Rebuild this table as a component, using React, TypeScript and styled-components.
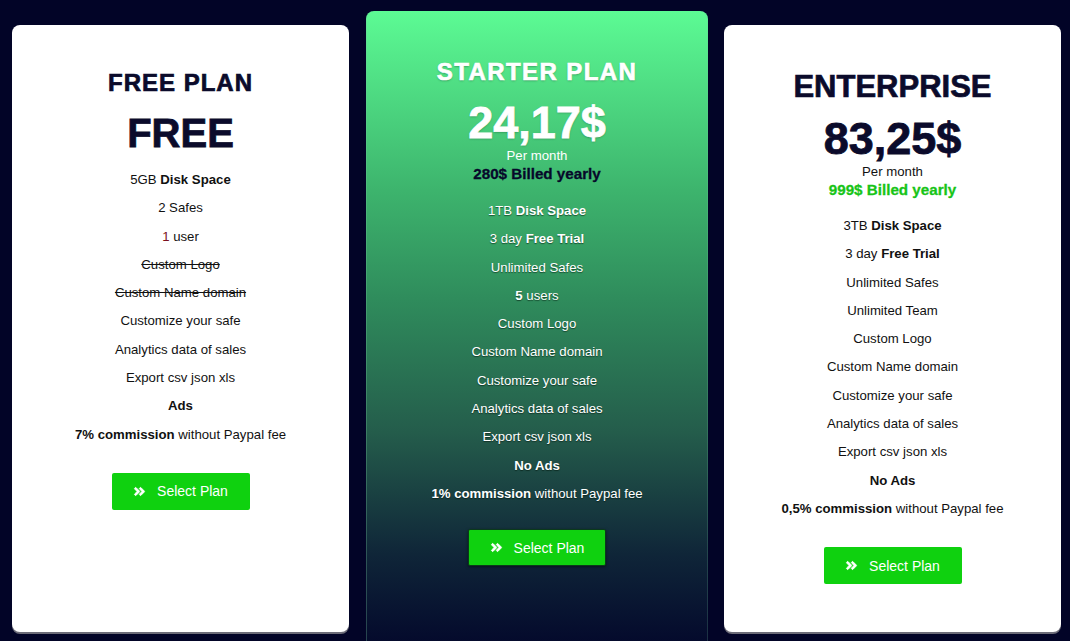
import { FC, ReactNode } from 'react'
import styled, { createGlobalStyle } from 'styled-components'
import { FaAngleDoubleRight } from 'react-icons/fa'

const GlobalStyle = createGlobalStyle`
  html, body {
    margin: 0;
    padding: 0;
    background: #020427;
    font-family: "Liberation Sans", Arial, sans-serif;
    overflow: hidden;
  }
`

const Page = styled.div`
  display: flex;
  align-items: flex-start;
  gap: 16px;
  padding-left: 12px;
  height: 641px;
  box-sizing: border-box;
`

const Card = styled.div<{ $featured?: boolean }>`
  display: flex;
  flex-direction: column;
  align-items: center;
  box-sizing: border-box;
  width: ${p => (p.$featured ? '342px' : '337px')};
  height: ${p => (p.$featured ? '640px' : '607px')};
  margin-top: ${p => (p.$featured ? '11px' : '25px')};
  margin-left: ${p => (p.$featured ? '1px' : '0')};
  padding-top: ${p => (p.$featured ? '47px' : '44px')};
  border-radius: 8px;
  color: #111;
  background: ${p =>
    p.$featured
      ? 'linear-gradient(180deg, #5cfb94 0%, #3db46d 28%, #2f8c5c 45%, #245c4b 66%, #0f2538 85%, #03072b 100%)'
      : '#fff'};
  box-shadow: ${p =>
    p.$featured
      ? 'inset 1px 0 0 rgba(120, 200, 160, 0.3), inset -1px 0 0 rgba(120, 200, 160, 0.2)'
      : '0 2px 0 #6c6c78'};
`

const Title = styled.h2<{ $size: number; $spacing: number; $light?: boolean }>`
  margin: 0;
  font-size: ${p => p.$size}px;
  line-height: ${p => p.$size + 4}px;
  font-weight: 700;
  letter-spacing: ${p => p.$spacing}px;
  -webkit-text-stroke: 0.7px ${p => (p.$light ? '#fff' : '#0b0b2b')};
  color: ${p => (p.$light ? '#fff' : '#0b0b2b')};
  text-shadow: ${p => (p.$light ? '0 1px 2px rgba(0, 40, 20, 0.35)' : 'none')};
`

const Price = styled.div<{ $size: number; $gap: number; $light?: boolean }>`
  margin-top: ${p => p.$gap}px;
  font-size: ${p => p.$size}px;
  line-height: ${p => p.$size + 4}px;
  font-weight: 700;
  -webkit-text-stroke: 0.8px ${p => (p.$light ? '#fff' : '#0b0b2b')};
  color: ${p => (p.$light ? '#fff' : '#0b0b2b')};
  text-shadow: ${p => (p.$light ? '0 1px 2px rgba(0, 40, 20, 0.35)' : 'none')};
`

const PerMonth = styled.div<{ $light?: boolean }>`
  font-size: 13.2px;
  line-height: 18px;
  color: ${p => (p.$light ? '#fff' : '#111')};
`

const Billed = styled.div<{ $color: string }>`
  font-size: 15.2px;
  line-height: 18px;
  font-weight: 700;
  -webkit-text-stroke: 0.3px ${p => p.$color};
  color: ${p => p.$color};
`

const Features = styled.ul<{ $gap: number; $light?: boolean }>`
  list-style: none;
  margin: ${p => p.$gap}px 0 0;
  padding: 0;
  text-align: center;
  font-size: 13.2px;
  line-height: 28.3px;
  color: ${p => (p.$light ? '#fff' : '#111')};
  text-shadow: ${p => (p.$light ? '0 1px 1px rgba(0, 20, 10, 0.55)' : 'none')};
`

const Feature = styled.li<{ $off?: boolean }>`
  text-decoration: ${p => (p.$off ? 'line-through' : 'none')};
`

const Accent = styled.span`
  color: #7a1020;
`

const Button = styled.button<{ $gap: number; $outlined?: boolean }>`
  display: flex;
  align-items: center;
  justify-content: center;
  gap: 11px;
  margin-top: ${p => p.$gap}px;
  width: 138px;
  height: 37px;
  padding: 0;
  border: ${p => (p.$outlined ? '1px solid #0a3a1a' : 'none')};
  border-radius: 2px;
  background: #0fd10f;
  color: #fff;
  font-family: inherit;
  font-size: 14px;
  cursor: pointer;
  box-shadow: ${p => (p.$outlined ? '0 1px 3px rgba(0, 0, 0, 0.5)' : 'none')};

  svg {
    width: 13px;
    height: 13px;
    stroke: #fff;
    stroke-width: 30px;
  }
`

type Item = { text: ReactNode; off?: boolean }

const PlanFeatures: FC<{ items: Item[]; gap: number; light?: boolean }> = ({ items, gap, light }) => (
  <Features $gap={gap} $light={light}>
    {items.map((item, i) => (
      <Feature key={i} $off={item.off}>{item.text}</Feature>
    ))}
  </Features>
)

const SelectButton: FC<{ gap: number; outlined?: boolean }> = ({ gap, outlined }) => (
  <Button $gap={gap} $outlined={outlined}>
    <FaAngleDoubleRight />
    Select Plan
  </Button>
)

const freeItems: Item[] = [
  { text: <>5GB <b>Disk Space</b></> },
  { text: '2 Safes' },
  { text: <><Accent>1</Accent> user</> },
  { text: 'Custom Logo', off: true },
  { text: 'Custom Name domain', off: true },
  { text: 'Customize your safe' },
  { text: 'Analytics data of sales' },
  { text: 'Export csv json xls' },
  { text: <b>Ads</b> },
  { text: <><b>7% commission</b> without Paypal fee</> },
]

const starterItems: Item[] = [
  { text: <>1TB <b>Disk Space</b></> },
  { text: <>3 day <b>Free Trial</b></> },
  { text: 'Unlimited Safes' },
  { text: <><b>5</b> users</> },
  { text: 'Custom Logo' },
  { text: 'Custom Name domain' },
  { text: 'Customize your safe' },
  { text: 'Analytics data of sales' },
  { text: 'Export csv json xls' },
  { text: <b>No Ads</b> },
  { text: <><b>1% commission</b> without Paypal fee</> },
]

const enterpriseItems: Item[] = [
  { text: <>3TB <b>Disk Space</b></> },
  { text: <>3 day <b>Free Trial</b></> },
  { text: 'Unlimited Safes' },
  { text: 'Unlimited Team' },
  { text: 'Custom Logo' },
  { text: 'Custom Name domain' },
  { text: 'Customize your safe' },
  { text: 'Analytics data of sales' },
  { text: 'Export csv json xls' },
  { text: <b>No Ads</b> },
  { text: <><b>0,5% commission</b> without Paypal fee</> },
]

const App: FC = () => (
  <>
    <GlobalStyle />
    <Page>
      <Card>
        <Title $size={24} $spacing={1}>FREE PLAN</Title>
        <Price $size={40} $gap={14}>FREE</Price>
        <PlanFeatures items={freeItems} gap={11} />
        <SelectButton gap={24} />
      </Card>

      <Card $featured>
        <Title $size={24} $spacing={1.4} $light>STARTER PLAN</Title>
        <Price $size={45} $gap={12} $light>24,17$</Price>
        <PerMonth $light>Per month</PerMonth>
        <Billed $color="#06082a">280$ Billed yearly</Billed>
        <PlanFeatures items={starterItems} gap={14} light />
        <SelectButton gap={21} outlined />
      </Card>

      <Card>
        <Title $size={31} $spacing={0}>ENTERPRISE</Title>
        <Price $size={45} $gap={10}>83,25$</Price>
        <PerMonth>Per month</PerMonth>
        <Billed $color="#17c417">999$ Billed yearly</Billed>
        <PlanFeatures items={enterpriseItems} gap={13} />
        <SelectButton gap={24} />
      </Card>
    </Page>
  </>
)

export default App
